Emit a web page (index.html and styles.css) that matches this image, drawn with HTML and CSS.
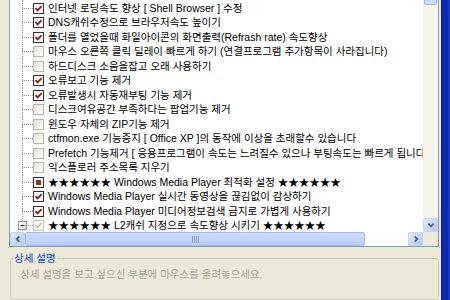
FILE: index.html
```html
<!DOCTYPE html>
<html lang="ko">
<head>
<meta charset="utf-8">
<link rel="stylesheet" href="styles.css">
</head>
<body>
<div class="window">
  <div class="content">
    <div class="listview">
      <div class="pane">
        <div class="rows">
          <div class="row"><span class="branch"></span><span class="cb on"><svg viewBox="0 0 9 9"><polyline points="1.5,4.2 3.6,6.4 7.6,2.2"/></svg></span><span class="label">윈도우 시작 속도향상</span></div>
          <div class="row"><span class="branch"></span><span class="cb on"><svg viewBox="0 0 9 9"><polyline points="1.5,4.2 3.6,6.4 7.6,2.2"/></svg></span><span class="label">인터넷 로딩속도 향상 [ Shell Browser ] 수정</span></div>
          <div class="row"><span class="branch"></span><span class="cb on"><svg viewBox="0 0 9 9"><polyline points="1.5,4.2 3.6,6.4 7.6,2.2"/></svg></span><span class="label">DNS캐쉬수정으로 브라우저속도 높이기</span></div>
          <div class="row"><span class="branch"></span><span class="cb on"><svg viewBox="0 0 9 9"><polyline points="1.5,4.2 3.6,6.4 7.6,2.2"/></svg></span><span class="label">폴더를 열었을때 화일아이콘의 화면출력(Refrash rate) 속도향상</span></div>
          <div class="row"><span class="branch"></span><span class="cb"></span><span class="label">마우스 오른쪽 클릭 딜레이 빠르게 하기 (연결프로그램 추가항목이 사라집니다)</span></div>
          <div class="row"><span class="branch"></span><span class="cb"></span><span class="label">하드디스크 소음을잡고 오래 사용하기</span></div>
          <div class="row"><span class="branch"></span><span class="cb on"><svg viewBox="0 0 9 9"><polyline points="1.5,4.2 3.6,6.4 7.6,2.2"/></svg></span><span class="label">오류보고 기능 제거</span></div>
          <div class="row"><span class="branch"></span><span class="cb on"><svg viewBox="0 0 9 9"><polyline points="1.5,4.2 3.6,6.4 7.6,2.2"/></svg></span><span class="label">오류발생시 자동재부팅 기능 제거</span></div>
          <div class="row"><span class="branch"></span><span class="cb"></span><span class="label">디스크여유공간 부족하다는 팝업기능 제거</span></div>
          <div class="row"><span class="branch"></span><span class="cb"></span><span class="label">윈도우 자체의 ZIP기능 제거</span></div>
          <div class="row"><span class="branch"></span><span class="cb"></span><span class="label">ctfmon.exe 기능중지 [ Office XP ]의 동작에 이상을 초래할수 있습니다</span></div>
          <div class="row"><span class="branch"></span><span class="cb"></span><span class="label">Prefetch 기능제거 [ 응용프로그램이 속도는 느려질수 있으나 부팅속도는 빠르게 됩니다 ]</span></div>
          <div class="row"><span class="branch"></span><span class="cb"></span><span class="label">익스플로러 주소목록 지우기</span></div>
          <div class="row"><span class="branch"></span><span class="cb mixed"></span><span class="label">★★★★★★ Windows Media Player 최적화 설정 ★★★★★★</span></div>
          <div class="row"><span class="branch"></span><span class="cb on"><svg viewBox="0 0 9 9"><polyline points="1.5,4.2 3.6,6.4 7.6,2.2"/></svg></span><span class="label">Windows Media Player 실시간 동영상을 끊김없이 감상하기</span></div>
          <div class="row"><span class="branch"></span><span class="cb on"><svg viewBox="0 0 9 9"><polyline points="1.5,4.2 3.6,6.4 7.6,2.2"/></svg></span><span class="label">Windows Media Player 미디어정보검색 금지로 가볍게 사용하기</span></div>
          <div class="row"><span class="branch"><span class="expander"><svg viewBox="0 0 7 7"><line x1="1.5" y1="3.5" x2="5.5" y2="3.5"/></svg></span></span><span class="cb dim"><svg viewBox="0 0 9 9"><polyline points="1.5,4.2 3.6,6.4 7.6,2.2"/></svg></span><span class="label">★★★★★★ L2캐쉬 지정으로 속도향상 시키기 ★★★★★★</span></div>
        </div>
      </div>
      <div class="vscroll">
        <div class="vthumb"></div>
        <div class="vtrack"></div>
        <div class="sbtn"><svg viewBox="0 0 9 9"><polyline points="1.5,3 4.5,6 7.5,3"/></svg></div>
      </div>
      <div class="hscroll">
        <div class="sbtn"><svg viewBox="0 0 9 9"><polyline points="6,1.5 3,4.5 6,7.5"/></svg></div>
        <div class="hthumb"><svg viewBox="0 0 8 7"><line x1="1.5" y1="0" x2="1.5" y2="7"/><line x1="3.5" y1="0" x2="3.5" y2="7"/><line x1="5.5" y1="0" x2="5.5" y2="7"/><line x1="7.5" y1="0" x2="7.5" y2="7"/></svg></div>
        <div class="htrack"></div>
        <div class="sbtn"><svg viewBox="0 0 9 9"><polyline points="3,1.5 6,4.5 3,7.5"/></svg></div>
      </div>
      <div class="corner"></div>
    </div>
    <fieldset class="details">
      <legend>상세 설명</legend>
      <p class="hint">상세 설명을 보고 싶으신 부분에 마우스를 올려놓으세요.</p>
    </fieldset>
  </div>
  <div class="frame"></div>
</div>
</body>
</html>
```

FILE: styles.css
```css
html, body {
  margin: 0;
  padding: 0;
}
body {
  width: 450px;
  height: 300px;
  overflow: hidden;
  background: #ECE9D8;
  font-family: "Liberation Sans", "Noto Sans CJK KR", sans-serif;
  font-size: 10.5px;
  color: #000;
}
.window {
  display: flex;
  height: 300px;
}
.content {
  flex: 1;
  display: flex;
  flex-direction: column;
  min-width: 0;
}
.frame {
  width: 9px;
  background: linear-gradient(to right, #0a1a86 0 1px, #0b29b0 1px 7px, #1638c4 7px);
}
.listview {
  margin: 0 2px 0 9px;
  height: 247px;
  box-sizing: border-box;
  border: 1px solid #7F9DB9;
  border-top: none;
  background: #fff;
  display: grid;
  grid-template-columns: 1fr 15px;
  grid-template-rows: 1fr 14px;
}
.pane {
  overflow: hidden;
  min-width: 0;
}
.rows {
  margin-top: -13.75px;
}
.row {
  display: flex;
  align-items: center;
  height: 14.5px;
  white-space: nowrap;
}
.branch {
  flex: none;
  display: flex;
  align-items: center;
  width: 11px;
  height: 100%;
  margin-left: 12px;
  background-image:
    linear-gradient(to bottom, #9a9a9a 50%, transparent 50%),
    linear-gradient(to right, #9a9a9a 50%, transparent 50%);
  background-size: 1px 2px, 2px 1px;
  background-repeat: repeat-y, repeat-x;
  background-position: 0 0, 2px 7px;
}
.expander {
  width: 9px;
  height: 9px;
  margin-left: -4px;
  box-sizing: border-box;
  border: 1px solid #8c9aa8;
  background: linear-gradient(135deg, #ffffff, #d6d3c6);
  display: flex;
}
.expander svg {
  width: 7px;
  height: 7px;
  stroke: #222;
  stroke-width: 1;
}
.cb {
  flex: none;
  width: 11px;
  height: 11px;
  box-sizing: border-box;
  border: 1px solid #b9b6aa;
  background: linear-gradient(135deg, #e2e0d6, #ffffff);
  display: flex;
  align-items: center;
  justify-content: center;
}
.cb.on {
  border-color: #3e2f28;
  background: #fff;
}
.cb svg {
  width: 9px;
  height: 9px;
  fill: none;
  stroke: #8a2410;
  stroke-width: 1.9;
}
.cb.mixed {
  border-color: #3e2f28;
  background: #fff;
}
.cb.mixed::after {
  content: "";
  width: 5px;
  height: 5px;
  background: #8b3520;
}
.cb.dim {
  border-color: #c8c6bb;
  background: #fbfbf8;
}
.cb.dim svg {
  stroke: #c8c6bb;
}
.label {
  margin-left: 4px;
  line-height: 14.5px;
}
.vscroll {
  display: flex;
  flex-direction: column;
  background: #F5F4EE;
}
.vthumb {
  height: 5px;
  box-sizing: border-box;
  margin: 0 1px;
  border: 1px solid #a3b9ee;
  border-top: none;
  border-radius: 0 0 2px 2px;
  background: #c9d8fc;
}
.vtrack {
  flex: 1;
}
.sbtn {
  flex: none;
  width: 15px;
  height: 14px;
  box-sizing: border-box;
  border: 1px solid #c6d4f7;
  border-radius: 2px;
  background: linear-gradient(135deg, #e3ebfe, #b4c7f5);
  display: flex;
  align-items: center;
  justify-content: center;
}
.sbtn svg {
  width: 8px;
  height: 8px;
  fill: none;
  stroke: #4d6185;
  stroke-width: 2;
}
.hscroll {
  display: flex;
  background: #fdfdfb;
}
.hthumb {
  width: 340px;
  box-sizing: border-box;
  border: 1px solid #a6bdf0;
  border-radius: 2px;
  background: linear-gradient(to bottom, #cfdcfd, #bccdf8);
  display: flex;
  align-items: center;
  justify-content: center;
}
.hthumb svg {
  width: 8px;
  height: 7px;
  stroke: #8ca5e6;
  stroke-width: 1;
}
.htrack {
  flex: 1;
}
.corner {
  background: #ECE9D8;
}
.details {
  margin: 4px 2px 0 10px;
  padding: 2px 8px 0 2px;
  border: 1px solid #D0D0BF;
  border-radius: 3px;
  flex: 1;
  min-width: 0;
}
.details legend {
  padding: 0 1px;
  color: #0046D5;
  line-height: 14px;
}
.hint {
  margin: 0 0 0 7px;
  line-height: 14.5px;
  color: #ACA899;
}
```
